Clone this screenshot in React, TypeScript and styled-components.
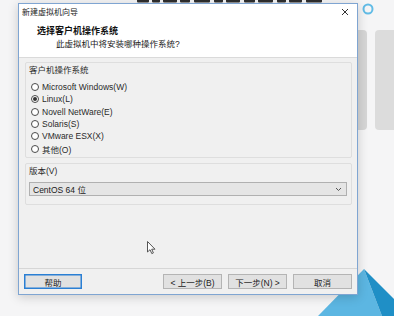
import React from 'react';
import styled, { createGlobalStyle } from 'styled-components';

const GlobalStyle = createGlobalStyle`
    html, body {
        margin: 0;
        padding: 0;
        background: #f5f5f6;
    }
    body {
        font-family: "Liberation Sans", "Noto Sans CJK SC", sans-serif;
        font-size: 8.5px;
        color: #1a1a1a;
    }
`;

const Desktop = styled.div`
    position: relative;
    width: 394px;
    height: 316px;
    overflow: hidden;
    background: #f5f5f6;
`;

const SideCard = styled.div<{ $left: number; $width: number; $tone: string }>`
    position: absolute;
    top: 30px;
    left: ${(p) => p.$left}px;
    width: ${(p) => p.$width}px;
    height: 100px;
    border-radius: 4px;
    background: ${(p) => p.$tone};
`;

const Decor = styled.svg`
    position: absolute;
    left: 0;
    top: 0;
    pointer-events: none;
`;

const Window = styled.div`
    position: absolute;
    left: 18px;
    top: 3px;
    width: 340px;
    height: 292px;
    box-sizing: border-box;
    border: 1px solid #7fa5d2;
    background: #f0f0f0;
    box-shadow: 0 2px 10px rgba(0, 0, 0, 0.18);
    display: flex;
    flex-direction: column;
`;

const TitleBar = styled.div`
    height: 15px;
    flex: none;
    display: flex;
    align-items: center;
    justify-content: space-between;
    padding: 0 8px 0 3px;
    background: #fff;
    font-size: 8px;
    color: #222;
`;

const Header = styled.div`
    flex: none;
    height: 39px;
    box-sizing: border-box;
    background: #fff;
    border-bottom: 1px solid #dadada;
    padding: 6px 0 0 18px;
`;

const HeaderTitle = styled.div`
    font-weight: 700;
    font-size: 9px;
    line-height: 12px;
    color: #111;
`;

const HeaderSub = styled.div`
    font-size: 8.5px;
    line-height: 12px;
    margin: 1px 0 0 19px;
    color: #222;
`;

const Body = styled.div`
    flex: 1;
    display: flex;
    flex-direction: column;
    gap: 5px;
    padding: 4px 5px 0 6px;
`;

const Group = styled.div<{ $height: number }>`
    height: ${(p) => p.$height}px;
    box-sizing: border-box;
    border: 1px solid #dedede;
    border-radius: 2px;
    padding: 2px 4px 0 3px;
    display: flex;
    flex-direction: column;
`;

const GroupLabel = styled.div`
    line-height: 11px;
    color: #2a2a2a;
    margin-bottom: 5px;
`;

const RadioRow = styled.label`
    display: flex;
    align-items: center;
    height: 12.3px;
    gap: 3px;
    padding-left: 2px;
    color: #2a2a2a;
`;

const RadioDot = styled.span<{ $on: boolean }>`
    width: 8px;
    height: 8px;
    box-sizing: border-box;
    border-radius: 50%;
    border: 1px solid #4a4a4a;
    background: #fff;
    display: flex;
    align-items: center;
    justify-content: center;

    &::after {
        content: '';
        width: 4px;
        height: 4px;
        border-radius: 50%;
        background: ${(p) => (p.$on ? '#333' : 'transparent')};
    }
`;

const Select = styled.div`
    height: 14px;
    box-sizing: border-box;
    border: 1px solid #b0b0b0;
    background: #e5e5e5;
    display: flex;
    align-items: center;
    justify-content: space-between;
    padding: 0 4px 0 3px;
    color: #1a1a1a;
`;

const Spacer = styled.div`
    flex: 1;
`;

const Footer = styled.div`
    flex: none;
    border-top: 1px solid #d6d6d6;
    display: flex;
    align-items: flex-start;
    padding: 5px 5px 0 5px;
    height: 26px;
    box-sizing: border-box;
    gap: 6px;
`;

const Button = styled.div<{ $primary?: boolean }>`
    width: 59px;
    height: 15px;
    box-sizing: border-box;
    border: 1px solid ${(p) => (p.$primary ? '#2a7fd4' : '#b4b4b4')};
    background: #e1e1e1;
    display: flex;
    align-items: center;
    justify-content: center;
    font-size: 8.5px;
    color: #222;
    ${(p) => p.$primary && 'box-shadow: inset 0 0 0 0.5px #2a7fd4; width: 58px; margin-right: auto;'}
`;

const Cursor = styled.svg`
    position: absolute;
    left: 147px;
    top: 241px;
`;

const systems = [
    'Microsoft Windows(W)',
    'Linux(L)',
    'Novell NetWare(E)',
    'Solaris(S)',
    'VMware ESX(X)',
    '其他(O)',
];

// blurred bottoms of a large heading behind the window
const strip = [
    [137, 12], [152, 8], [163, 14], [180, 10], [194, 16], [214, 9], [226, 14],
    [244, 11], [258, 15], [277, 9], [289, 13], [306, 16],
];

export default function App() {
    return (
        <Desktop>
            <GlobalStyle />
            <SideCard $left={350} $width={17} $tone='#d6d6d6' />
            <SideCard $left={375} $width={24} $tone='#dcdcdc' />
            <Decor width='394' height='316' viewBox='0 0 394 316'>
                <defs>
                    <filter id='soft'>
                        <feGaussianBlur stdDeviation='0.6' />
                    </filter>
                </defs>
                <g filter='url(#soft)' fill='#2e2e2e'>
                    {strip.map(([x, w]) => (
                        <rect key={x} x={x} y={-2} width={w} height={4.5} rx={1} />
                    ))}
                </g>
                <circle cx='368' cy='9' r='4.5' fill='none' stroke='#62bce6' strokeWidth='2' />
                <polygon points='318,316 364,269 382,316' fill='#5cb6e2' />
                <polygon points='364,269 394,299 394,316 382,316' fill='#1f8fc6' />
            </Decor>
            <Window>
                <TitleBar>
                    <span>新建虚拟机向导</span>
                    <svg width='8' height='8' viewBox='0 0 8 8'>
                        <path d='M1 1 L7 7 M7 1 L1 7' stroke='#333' strokeWidth='1' />
                    </svg>
                </TitleBar>
                <Header>
                    <HeaderTitle>选择客户机操作系统</HeaderTitle>
                    <HeaderSub>此虚拟机中将安装哪种操作系统?</HeaderSub>
                </Header>
                <Body>
                    <Group $height={96}>
                        <GroupLabel>客户机操作系统</GroupLabel>
                        {systems.map((s) => (
                            <RadioRow key={s}>
                                <RadioDot $on={s === 'Linux(L)'} />
                                {s}
                            </RadioRow>
                        ))}
                    </Group>
                    <Group $height={42}>
                        <GroupLabel>版本(V)</GroupLabel>
                        <Select>
                            <span>CentOS 64 位</span>
                            <svg width='7' height='5' viewBox='0 0 7 5'>
                                <path d='M1 1 L3.5 3.5 L6 1' fill='none' stroke='#555' strokeWidth='1' />
                            </svg>
                        </Select>
                    </Group>
                    <Spacer />
                </Body>
                <Footer>
                    <Button $primary>帮助</Button>
                    <Button>&lt; 上一步(B)</Button>
                    <Button>下一步(N) &gt;</Button>
                    <Button>取消</Button>
                </Footer>
            </Window>
            <Cursor width='10' height='14' viewBox='0 0 10 14'>
                <path d='M0.5 0.5 L0.5 11 L3 8.7 L4.8 12.6 L6.4 11.9 L4.7 8.2 L8 8.2 Z' fill='#fff' stroke='#555' strokeWidth='1' />
            </Cursor>
        </Desktop>
    );
}
